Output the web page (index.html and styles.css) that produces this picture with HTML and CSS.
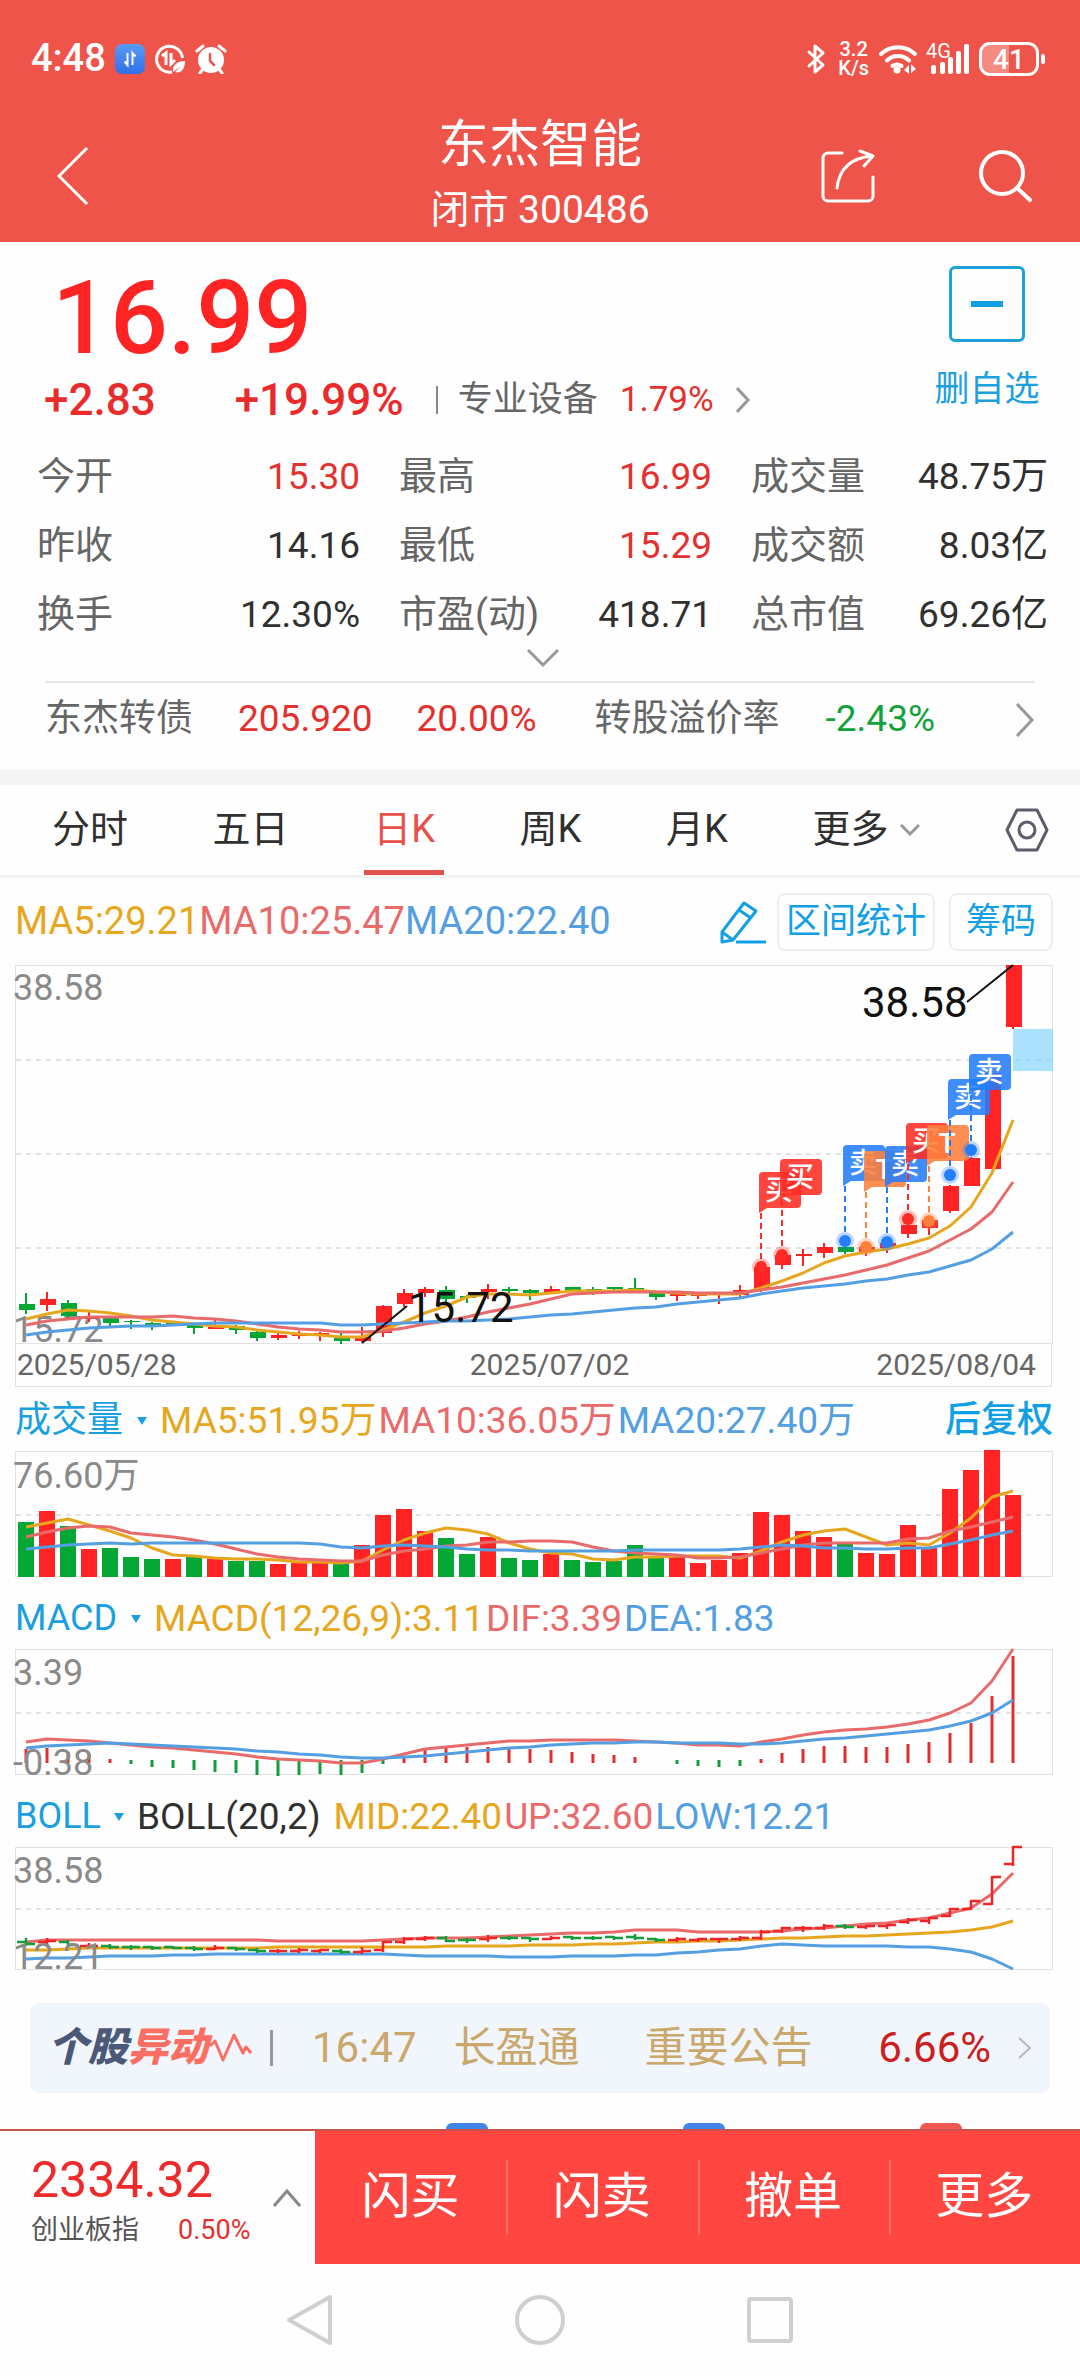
FILE: index.html
```
<!DOCTYPE html>
<html lang="zh-CN">
<head>
	<meta charset="utf-8">
	<meta name="viewport" content="width=device-width, initial-scale=1">
	<title>东杰智能 300486</title>
	<link rel="stylesheet" href="styles.css">
</head>
<body>

<header>
	<div class="status">
		<span class="clock">4:48</span>
		<svg width="30" height="30" viewBox="0 0 30 30">
			<defs><linearGradient id="blue" x1="0" y1="0" x2="0" y2="1"><stop offset="0" stop-color="#5a9bf5"/><stop offset="1" stop-color="#2f6fe8"/></linearGradient></defs>
			<rect width="30" height="30" rx="7" fill="url(#blue)"/>
			<path d="M12.500 9v12l-3-3.500M17.500 21V9l3 3.500" fill="none" stroke="#fff" stroke-width="2"/>
		</svg>
		<svg width="32" height="30" viewBox="0 0 32 30" fill="none" stroke="#fff" stroke-width="3">
			<path d="M18 28A13 13 0 1 1 28.500 14"/>
			<path d="M8 12l4-3v12M17 9v11l4-4" stroke-width="3"/>
			<path d="M19 28c-1-7 4-11 12-11 0 8-4 13-10 11l6-6" fill="#fff" stroke="none"/>
		</svg>
		<svg width="32" height="30" viewBox="0 0 32 30" fill="none" stroke="#fff" stroke-width="3" stroke-linecap="round">
			<circle cx="16" cy="16" r="11.500" fill="#fff"/>
			<path d="M2 7l6-5M30 7l-6-5M8 25l-3 4M24 25l3 4"/>
			<path d="M15 10v7l4 4" stroke="#ee5449" stroke-width="2.500"/>
		</svg>
		<span class="spacer"></span>
		<svg width="20" height="32" viewBox="0 0 20 32" fill="none" stroke="#fff" stroke-width="3" stroke-linejoin="round" stroke-linecap="round">
			<path d="M3 9l14 13-8 7V3l8 7L3 23"/>
		</svg>
		<span class="speed"><span>3.2</span><span>K/s</span></span>
		<svg width="38" height="30" viewBox="0 0 38 30" fill="none" stroke="#fff" stroke-width="4" stroke-linecap="round">
			<path d="M2 10a25 25 0 0 1 34 0M8 16.500a16 16 0 0 1 22 0M13.500 22a8 8 0 0 1 9 0"/>
			<circle cx="18" cy="26" r="3.500" fill="#fff" stroke="none"/>
			<path d="M25 26l5-5v9zM37 25l-5-5v9z" fill="#fff" stroke="none"/>
		</svg>
		<span class="signal">
			<span class="gen">4G</span>
			<svg width="39" height="32" viewBox="0 0 39 32" fill="#fff">
				<rect x="0" y="22" width="5" height="9" rx="2"/><rect x="9" y="19" width="5" height="12" rx="2"/>
				<rect x="17" y="14" width="5" height="17" rx="2"/><rect x="25" y="8" width="5" height="23" rx="2"/>
				<rect x="33" y="1" width="5" height="30" rx="2"/>
			</svg>
		</span>
		<span class="battery">41</span>
	</div>

	<div class="titlebar">
		<button class="icon" aria-label="返回">
			<svg width="32" height="60" viewBox="0 0 32 60" fill="none" stroke="#fff" stroke-width="3"><path d="M30 2L2 30l28 28"/></svg>
		</button>
		<div class="title">
			<h1>东杰智能</h1>
			<p>闭市 300486</p>
		</div>
		<div class="actions">
			<button class="icon" aria-label="分享">
				<svg width="54" height="54" viewBox="0 0 54 54" fill="none" stroke="#fff" stroke-width="3" stroke-linejoin="round" stroke-linecap="round">
					<path d="M21 4H7a5 5 0 0 0-5 5v38a5 5 0 0 0 5 5h40a5 5 0 0 0 5-5V28"/>
					<path d="M16 39C18 22 28 9 51 7M39 2l13 5-9 10"/>
				</svg>
			</button>
			<button class="icon" aria-label="搜索">
				<svg width="54" height="54" viewBox="0 0 54 54" fill="none" stroke="#fff" stroke-width="4" stroke-linecap="round">
					<circle cx="24" cy="24" r="21"/><path d="M39 39l13 12"/>
				</svg>
			</button>
		</div>
	</div>
</header>

<section class="quote">
	<div class="top">
		<div>
			<div class="price">16.99</div>
			<div class="change">
				<b>+2.83</b>
				<b>+19.99%</b>
				<a class="sector" href="#"><span>专业设备</span><span class="up">1.79%</span>
					<svg width="14" height="26" viewBox="0 0 14 26" fill="none" stroke="#999" stroke-width="3"><path d="M1 1l11 12L1 25"/></svg>
				</a>
			</div>
		</div>
		<button class="fav"><i></i>删自选</button>
	</div>

	<dl class="stats">
		<div><dt>今开</dt><dd class="up">15.30</dd></div>
		<div><dt>最高</dt><dd class="up">16.99</dd></div>
		<div><dt>成交量</dt><dd>48.75万</dd></div>
		<div><dt>昨收</dt><dd>14.16</dd></div>
		<div><dt>最低</dt><dd class="up">15.29</dd></div>
		<div><dt>成交额</dt><dd>8.03亿</dd></div>
		<div><dt>换手</dt><dd>12.30%</dd></div>
		<div><dt>市盈(动)</dt><dd>418.71</dd></div>
		<div><dt>总市值</dt><dd>69.26亿</dd></div>
	</dl>
	<button class="expand" aria-label="展开">
		<svg width="32" height="18" viewBox="0 0 32 18" fill="none" stroke="#999" stroke-width="3"><path d="M1 1l15 15L31 1"/></svg>
	</button>

	<a class="bond" href="#">
		<span>东杰转债</span>
		<span class="up first">205.920</span>
		<span class="up second">20.00%</span>
		<span>转股溢价率</span>
		<span class="down third">-2.43%</span>
		<svg width="20" height="34" viewBox="0 0 20 34" fill="none" stroke="#999" stroke-width="3"><path d="M2 1l15 16L2 33"/></svg>
	</a>
</section>

<nav class="tabs">
	<button>分时</button>
	<button>五日</button>
	<button class="on">日K</button>
	<button>周K</button>
	<button>月K</button>
	<button>更多<svg width="20" height="12" viewBox="0 0 20 12" fill="none" stroke="#999" stroke-width="3"><path d="M1 1l9 9 9-9"/></svg></button>
	<button aria-label="设置">
		<svg width="44" height="44" viewBox="0 0 44 44" fill="none" stroke="#5b5d6b" stroke-width="3" stroke-linejoin="round">
			<path d="M12 2h20l10 20-10 20H12L2 22z"/><circle cx="22" cy="22" r="8"/>
		</svg>
	</button>
</nav>

<main>
	<div class="legend kline">
		<span class="c5">MA5:29.21</span><span class="c10">MA10:25.47</span><span class="c20">MA20:22.40</span>
		<span class="spacer"></span>
		<button class="pencil" aria-label="画线">
			<svg width="46" height="44" viewBox="0 0 46 44" fill="none" stroke="#12a0e4" stroke-width="3" stroke-linejoin="round">
				<path d="M2 42V32L24 3l12 8-23 29zM2 32l11 8M19 10l12 8"/><path d="M16 42h30"/>
			</svg>
		</button>
		<button class="tool">区间统计</button>
		<button class="tool wide">筹码</button>
	</div>
	<svg class="chart" id="kline" viewBox="0 0 1080 379"></svg>
	<div class="dates"><span>2025/05/28</span><span class="middle">2025/07/02</span><span>2025/08/04</span></div>

	<div class="legend">
		<label class="picker"><select aria-label="指标一"><option>成交量</option></select><i></i></label>
		<span class="c5">MA5:51.95万</span><span class="c10">MA10:36.05万</span><span class="c20">MA20:27.40万</span>
		<span class="spacer"></span>
		<button class="adjust">后复权</button>
	</div>
	<svg class="chart" id="volume" viewBox="0 0 1080 126"></svg>

	<div class="legend tall">
		<label class="picker"><select aria-label="指标二"><option>MACD</option></select><i></i></label>
		<span class="c5">MACD(12,26,9):3.11</span><span class="c10">DIF:3.39</span><span class="c20">DEA:1.83</span>
	</div>
	<svg class="chart" id="macd" viewBox="0 0 1080 126"></svg>

	<div class="legend tall">
		<label class="picker"><select aria-label="指标三"><option>BOLL</option></select><i></i></label>
		<span class="param">BOLL(20,2)</span><span class="c5">MID:22.40</span><span class="c10">UP:32.60</span><span class="c20">LOW:12.21</span>
	</div>
	<svg class="chart" id="boll" viewBox="0 0 1080 123"></svg>

	<a class="notice" href="#">
		<span class="logo">个股<em>异动</em></span>
		<svg class="pulse" width="42" height="34" viewBox="0 0 42 34" fill="none" stroke="#fb6f63" stroke-width="3" stroke-linejoin="round"><path d="M0 15l5-5 8 19L24 4l9 18 3-6 5 6"/></svg>
		<span class="time">16:47</span>
		<span class="name">长盈通</span>
		<span class="what">重要公告</span>
		<span class="pct">6.66%</span>
		<svg width="14" height="22" viewBox="0 0 14 22" fill="none" stroke="#b5b8c0" stroke-width="2"><path d="M1 1l11 10L1 21"/></svg>
	</a>

	<div class="shortcuts"><i></i><i></i><i class="hot"></i></div>
</main>

<footer>
	<div class="trade">
		<button class="index">
			<span class="num">2334.32</span>
			<span class="sub"><span>创业板指</span><span class="up">0.50%</span></span>
			<svg width="28" height="18" viewBox="0 0 28 18" fill="none" stroke="#888" stroke-width="3"><path d="M1 17L14 2l13 15"/></svg>
		</button>
		<button class="act">闪买</button>
		<button class="act">闪卖</button>
		<button class="act">撤单</button>
		<button class="act">更多</button>
	</div>
	<div class="sysnav">
		<button class="icon" aria-label="后退"><svg width="52" height="52" viewBox="0 0 52 52" fill="none" stroke="#cfcfcf" stroke-width="4" stroke-linejoin="round"><path d="M46 3v46L5 26z"/></svg></button>
		<button class="icon" aria-label="主页"><svg width="52" height="52" viewBox="0 0 52 52" fill="none" stroke="#cfcfcf" stroke-width="4"><circle cx="26" cy="26" r="23"/></svg></button>
		<button class="icon" aria-label="最近任务"><svg width="52" height="52" viewBox="0 0 52 52" fill="none" stroke="#cfcfcf" stroke-width="4"><rect x="5" y="5" width="42" height="42" rx="2"/></svg></button>
	</div>
</footer>

<script src="charts.js"></script>
</body>
</html>
```

FILE: styles.css
```
* {
	box-sizing: border-box;
}

body {
	margin: 0;
	min-height: 100vh;
	background-color: #fefefe;
	color: #303030;
	font-family: Roboto, "Noto Sans CJK SC", sans-serif;
	font-size: 36px;
	line-height: 1.2;
}

h1, p, dl, dd {
	margin: 0;
	font-weight: normal;
}

button, select {
	margin: 0;
	padding: 0;
	border: 0;
	background: none;
	color: inherit;
	font: inherit;
	cursor: pointer;
}

a {
	color: inherit;
	text-decoration: none;
}

svg {
	display: block;
	flex: none;
}

.spacer {
	flex: 1;
}

.up {
	color: #e3312f;
}

.down {
	color: #12a23c;
}

/* red header */

header {
	background-color: #ee5449;
	color: #fff;
}

.status {
	display: flex;
	align-items: center;
	gap: 9px;
	height: 110px;
	padding: 8px 41px 0 31px;
}

.clock {
	font-size: 38px;
	font-weight: 500;
}

.speed {
	display: flex;
	flex-direction: column;
	margin: 0 1px 0 3px;
	font-size: 20px;
	font-weight: 500;
	line-height: 19px;
	text-align: center;
}

.signal {
	position: relative;
	padding-left: 5px;
}

.gen {
	position: absolute;
	left: 0;
	top: 0;
	font-size: 20px;
	line-height: 16px;
}

.battery {
	position: relative;
	width: 60px;
	height: 34px;
	border: 3px solid #fff;
	border-radius: 11px;
	background: linear-gradient(90deg, #f48a82 50%, transparent 50%);
	font-size: 28px;
	font-weight: 500;
	line-height: 29px;
	text-align: center;
}

.battery:after {
	content: "";
	position: absolute;
	right: -9px;
	top: 9px;
	width: 4px;
	height: 10px;
	border-radius: 2px;
	background-color: #fff;
}

.titlebar {
	display: grid;
	grid-template-columns: 1fr auto 1fr;
	height: 132px;
	padding: 0 48px 0 48px;
}

.icon {
	display: flex;
	align-items: center;
}

.titlebar > .icon {
	padding-left: 9px;
}

.actions {
	display: flex;
	justify-content: flex-end;
	gap: 103px;
}

.title {
	padding-top: 7px;
	text-align: center;
}

.title h1 {
	font-size: 51px;
	line-height: 56px;
}

.title p {
	margin-top: 12px;
	font-size: 39px;
	line-height: 50px;
}

/* quote */

.quote {
	padding: 24px 32px 14px 37px;
	border-bottom: 15px solid #f4f4f4;
}

.top {
	display: flex;
	justify-content: space-between;
}

.price {
	padding-left: 15px;
	color: #ff2323;
	font-size: 102px;
	font-weight: 500;
	line-height: 104px;
}

.change {
	display: flex;
	align-items: center;
	gap: 79px;
	height: 60px;
	padding-left: 7px;
	color: #ea2b2b;
	font-size: 44px;
}

.change b {
	font-weight: 500;
}

.sector {
	display: flex;
	align-items: center;
	gap: 22px;
	height: 28px;
	margin-left: -47px;
	padding-left: 20px;
	border-left: 2px solid #888;
	color: #666;
	font-size: 35px;
}

.fav {
	width: 112px;
	height: 144px;
	margin-right: 5px;
	color: #1ea0dc;
	font-size: 35px;
	line-height: 40px;
}

.fav i {
	display: block;
	width: 76px;
	height: 76px;
	margin: 0 auto 28px;
	border: 3px solid #1ea0dc;
	border-radius: 6px;
	background: linear-gradient(#12a0e4, #12a0e4) center / 32px 6px no-repeat;
}

.stats {
	display: grid;
	grid-template-columns: 323fr 313fr 297fr;
	column-gap: 39px;
	margin-top: 12px;
	line-height: 69px;
}

.stats div {
	display: flex;
	justify-content: space-between;
}

.stats dt {
	color: #666;
	font-size: 38px;
}

.stats dd {
	font-size: 37px;
	white-space: nowrap;
}

.expand {
	display: block;
	width: 100%;
	height: 32px;
}

.expand svg {
	margin: 0 auto 14px;
}

.bond {
	display: flex;
	align-items: center;
	height: 75px;
	margin: 0 13px 0 8px;
	border-top: 2px solid #e6e6e6;
	color: #666;
	font-size: 37px;
}

.bond .first {
	margin-left: 45px;
}

.bond .second {
	margin: 0 58px 0 44px;
}

.bond .third {
	margin-left: 46px;
	margin-right: auto;
}

/* period tabs */

.tabs {
	display: flex;
	justify-content: space-between;
	height: 93px;
	padding: 0 31px 0 52px;
	border-bottom: 3px solid #f3f3f3;
	font-size: 38px;
}

.tabs button {
	display: flex;
	align-items: center;
	position: relative;
	gap: 12px;
}

.tabs .on {
	color: #e8504c;
}

.tabs .on:after {
	content: "";
	position: absolute;
	left: -9px;
	right: -9px;
	bottom: 0;
	height: 5px;
	background-color: #e2504f;
}

/* charts */

.legend {
	display: flex;
	align-items: center;
	gap: 2px;
	height: 64px;
	padding: 4px 27px 0 15px;
	font-size: 37px;
	white-space: nowrap;
}

.kline {
	gap: 0;
	height: 87px;
	padding-top: 0;
	font-size: 38px;
}

.tall {
	height: 72px;
	padding-top: 12px;
}

.c5 {
	color: #e6a71f;
}

.c10 {
	color: #e86a6a;
}

.c20 {
	color: #539fe2;
}

.param {
	margin-right: 11px;
}

.pencil {
	margin-right: 11px;
}

.tool {
	height: 58px;
	padding: 0 7px;
	border: 2px solid #eee;
	border-radius: 8px;
	color: #12a0e4;
	font-size: 35px;
}

.wide {
	margin-left: 14px;
	padding: 0 15px;
}

.picker {
	display: flex;
	align-items: center;
	gap: 13px;
	margin-right: 11px;
	color: #1a9fe0;
	font-size: 36px;
}

.picker select {
	appearance: none;
}

.picker i {
	border: 5px solid transparent;
	border-top: 8px solid #1a9fe0;
	border-bottom: 0;
}

.adjust {
	color: #12a0e4;
	font-size: 36px;
	font-weight: 500;
}

.chart {
	width: 100%;
	overflow: visible;
}

.frame {
	fill: none;
	stroke: #e2e2e2;
	stroke-width: 1;
}

.grid {
	stroke: #e2e2e2;
	stroke-width: 2;
	stroke-dasharray: 5 5;
}

.line {
	fill: none;
	stroke-width: 3;
	stroke-linejoin: round;
}

.axis {
	fill: #8a8a8a;
	font-size: 36px;
}

.mark {
	fill: #111;
	font-size: 42px;
}

.flag {
	fill: #fff;
	font-size: 28px;
	font-weight: 500;
	text-anchor: middle;
}

.dates {
	display: flex;
	justify-content: space-between;
	height: 43px;
	margin: 0 28px 0 15px;
	padding: 0 15px 0 1px;
	border: 1px solid #e2e2e2;
	border-top: 0;
	color: #666;
	font-size: 30px;
	line-height: 41px;
}

.dates .middle {
	margin-left: 46px;
}

/* notice strip */

.notice {
	display: flex;
	align-items: center;
	height: 90px;
	margin: 33px 30px 30px;
	padding: 0 18px 0 18px;
	border-radius: 8px;
	background-color: #f1f5fc;
	color: #caa76b;
	font-size: 42px;
}

.logo {
	color: #4b5878;
	font-size: 40px;
	font-weight: 900;
	font-style: italic;
}

.logo em {
	color: #fb6f63;
}

.pulse {
	margin-left: 2px;
}

.time {
	margin-left: 18px;
	padding-left: 42px;
	background: linear-gradient(#999, #999) left center / 3px 36px no-repeat;
}

.name {
	margin-left: 37px;
}

.what {
	margin-left: 65px;
}

.pct {
	margin-left: auto;
	margin-right: 27px;
	color: #cc2020;
}

.shortcuts {
	display: flex;
	gap: 195px;
	height: 6px;
	padding-left: 446px;
	overflow: hidden;
}

.shortcuts i {
	width: 42px;
	height: 42px;
	border-radius: 6px;
	background-color: #3f86e6;
}

.shortcuts .hot {
	background-color: #f0574f;
}

/* bottom bars */

.trade {
	display: flex;
	height: 135px;
	border-top: 2px solid #c9534d;
}

.index {
	position: relative;
	width: 315px;
	padding: 4px 0 0 31px;
	text-align: left;
}

.index .num {
	display: block;
	color: #ee2a2a;
	font-size: 50px;
	line-height: 60px;
}

.index .sub {
	display: flex;
	gap: 39px;
	color: #555;
	font-size: 27px;
	line-height: 40px;
}

.index svg {
	position: absolute;
	right: 14px;
	top: 58px;
}

.act {
	flex: 1;
	background-color: #ff4640;
	color: #fff;
	font-size: 49px;
}

.act + .act {
	background-image: linear-gradient(#ff6f68, #ff6f68);
	background-position: left center;
	background-size: 2px 75px;
	background-repeat: no-repeat;
}

.sysnav {
	display: flex;
	justify-content: center;
	gap: 178px;
	height: 112px;
}
```

FILE: charts.js
```
var RED = '#ff2323';
var GREEN = '#04a733';
var C5 = '#e6a71f', C10 = '#e86a6a', C20 = '#539fe2';

// one entry per day: colour, high, body top, body bottom, low
var candles = [
	['g',328,339,345,349],['r',327,334,340,346],['g',335,338,351,355],['r',347,352,354,357],
	['g',351,352,358,361],['g',355,356,357,364],['g',357,358,360,365],['g',358,358,360,360],
	['g',358,360,363,369],['r',353,362,364,364],['g',360,361,365,369],['g',365,367,373,376],
	['r',368,370,373,375],['r',366,369,371,374],['r',367,368,370,376],['g',368,373,376,379],
	['r',362,372,376,377],['r',340,341,368,372],['r',324,328,339,342],['r',322,324,328,332],
	['g',321,325,334,337],['g',330,331,333,338],['r',319,324,327,334],['g',322,324,326,328],
	['g',324,325,328,335],['r',321,324,328,328],['g',322,322,325,327],['g',322,324,326,330],
	['g',322,322,324,328],['g',313,323,325,328],['g',327,328,332,335],['r',326,329,331,336],
	['r',328,329,331,334],['r',327,328,330,339],['r',320,325,330,332],['r',300,302,324,327],
	['r',288,290,300,304],['r',284,289,291,301],['r',278,282,288,293],['g',280,282,287,289],
	['r',281,282,287,291],['r',278,278,283,288],['r',258,260,269,273],['r',253,255,263,270],
	['r',220,221,246,248],['r',192,193,221,221],['r',108,108,204,204],['r',0,0,62,64]
];

var ma5 = [354,349,345,346,348,351,355,357,359,361,362,365,367,369,370,372,372,365,357,348,341,332,329,329,330,328,326,326,326,325,327,328,329,329,329,323,316,308,298,291,287,284,279,273,261,242,208,155];
var ma10 = [360,356,354,352,352,352,352,351,353,354,356,359,362,364,365,367,367,366,363,359,356,352,347,343,339,334,329,328,327,327,327,327,328,328,328,325,322,318,314,310,305,300,293,286,275,264,247,217];
var ma20 = [370,367,365,363,362,361,361,360,359,358,358,358,358,358,358,360,360,359,358,357,356,356,355,354,352,350,349,347,345,343,342,339,337,335,333,329,326,323,321,319,316,314,310,307,301,295,284,267];

var vols = [55,66,51,28,29,20,18,18,20,18,16,16,13,14,14,14,32,62,68,46,39,23,40,19,17,23,17,15,16,32,20,20,14,17,24,65,62,46,40,33,24,23,52,30,88,107,127,82];
var volRed = [1,3,7,9,12,13,14,16,17,18,19,22,25,31,32,33,34,35,36,37,38,40,41,42,43,44,45,46,47];
var vol5 = [76,72,68,74,80,87,97,104,105,107,108,108,109,111,111,112,110,99,89,82,77,79,83,92,98,102,103,108,109,106,106,105,105,105,107,100,91,84,80,78,86,94,92,94,82,67,46,40];
var vol10 = [86,81,77,75,76,82,84,86,89,93,98,103,106,108,109,110,110,104,100,98,95,94,91,91,90,90,91,96,100,102,103,104,107,107,106,102,98,94,92,92,92,92,88,87,80,76,71,66];
var vol20 = [98,96,94,93,92,93,92,92,92,92,92,92,92,92,93,96,97,95,94,95,96,98,99,99,100,100,100,100,100,99,99,99,99,99,98,96,94,95,97,97,98,98,97,97,93,89,84,80];

var hist = [100,99,103,105,110,115,118,119,121,123,124,126,127,126,125,126,124,115,109,99,98,98,98,99,100,101,103,105,106,108,113,115,117,118,117,110,104,100,97,97,98,98,95,93,84,74,47,7];
var dif = [93,90,91,92,94,96,98,99,101,103,105,108,110,111,112,114,114,110,105,100,98,96,94,92,92,91,91,91,91,92,93,94,96,96,97,93,90,86,83,81,80,78,75,71,64,54,32,0];
var dea = [99,97,96,95,94,95,96,97,98,99,100,102,103,105,106,108,109,109,108,107,105,103,101,99,98,96,95,94,94,93,93,94,94,94,95,95,94,92,90,89,87,85,83,81,77,72,64,51];

var up = [95,93,93,93,93,93,93,93,93,93,93,93,94,94,94,94,94,93,92,91,91,91,90,89,88,87,86,86,85,83,83,83,85,85,85,85,84,82,81,79,77,76,73,71,66,61,47,26];
var mid = [103,103,102,101,101,101,101,101,101,101,101,101,100,100,100,100,100,100,100,100,99,99,99,99,98,98,98,97,97,96,95,95,94,94,93,92,91,91,90,89,89,88,87,86,85,83,80,74];
var low = [112,111,111,110,109,109,109,108,108,107,107,107,107,107,107,107,107,107,108,109,109,109,109,110,110,110,109,109,109,108,108,106,105,103,102,99,97,98,99,99,99,99,100,100,102,105,112,122];

// buy / sell / T flags: day, kind, flag top, dot y
var flags = [
	[35,'买',207,302],[36,'买',194,290],[39,'卖',180,276],[40,'T',186,282],[41,'卖',181,277],
	[42,'买',158,254],[43,'T',160,256],[44,'卖',114,210],[45,'卖',89,185]
];
var flagColor = { '买': '#fe2c24', '卖': '#247dfb', 'T': '#fe803c' };

function x(i) {
	return 26 + 21 * i;
}

function frame(h, rows) {
	var s = '<rect class="frame" x="15.500" y="0.500" width="1037" height="' + (h - 1) + '"/>';
	rows.forEach(function (y) {
		s += '<path class="grid" d="M16 ' + y + 'H1052"/>';
	});
	return s;
}

function line(data, color) {
	var pts = data.map(function (y, i) { return x(i) + ',' + y; });
	return '<polyline class="line" stroke="' + color + '" points="' + pts.join(' ') + '"/>';
}

function axis(y, text) {
	return '<text class="axis" x="13" y="' + y + '">' + text + '</text>';
}

function drawKline() {
	var s = frame(379, [95, 189, 283]);
	s += '<rect x="1013" y="64" width="40" height="42" fill="#7dd3fd" opacity="0.650"/>';
	s += axis(35, '38.58') + axis(377, '15.72');
	candles.forEach(function (c, i) {
		var color = c[0] == 'r' ? RED : GREEN;
		s += '<path d="M' + x(i) + ' ' + c[1] + 'V' + c[4] + '" stroke="' + color + '" stroke-width="2"/>';
		s += '<rect x="' + (x(i) - 7) + '" y="' + c[2] + '" width="16" height="' + (c[3] - c[2]) + '" fill="' + color + '"/>';
	});
	s += line(ma5, C5) + line(ma10, C10) + line(ma20, C20);
	s += '<path d="M967 37L1013 0M362 378L407 341" stroke="#111" stroke-width="2"/>';
	s += '<text class="mark" x="862" y="52">38.58</text><text class="mark" x="408" y="357">15.72</text>';

	flags.forEach(function (f) {
		var cx = x(f[0]), top = f[2], color = flagColor[f[1]];
		s += '<path d="M' + cx + ' ' + (top + 41) + 'V' + f[3] + '" stroke="' + color + '" stroke-width="2" stroke-dasharray="6 4"/>';
		s += '<circle cx="' + cx + '" cy="' + f[3] + '" r="9" fill="' + color + '" opacity="0.300"/>';
		s += '<circle cx="' + cx + '" cy="' + f[3] + '" r="6" fill="' + color + '"/>';
		s += '<path fill="' + color + '" opacity="0.880" d="M' + (cx - 2) + ' ' + (top + 41) + 'v-37a4 4 0 0 1 4-4h34a4 4 0 0 1 4 4v28a4 4 0 0 1-4 4h-30z"/>';
		s += '<text class="flag" x="' + (cx + 18) + '" y="' + (top + 28) + '">' + f[1] + '</text>';
	});
	document.getElementById('kline').innerHTML = s;
}

function drawVolume() {
	var s = frame(126, [64]);
	vols.forEach(function (v, i) {
		var color = volRed.indexOf(i) > -1 ? RED : GREEN;
		s += '<rect x="' + (x(i) - 8) + '" y="' + (126 - v) + '" width="16" height="' + v + '" fill="' + color + '"/>';
	});
	s += line(vol5, C5) + line(vol10, C10) + line(vol20, C20) + axis(37, '76.60万');
	document.getElementById('volume').innerHTML = s;
}

function drawMacd() {
	var s = frame(126, [64]);
	hist.forEach(function (y, i) {
		if (y == 113) return;
		var red = y < 113;
		s += '<path d="M' + x(i) + ' ' + (red ? 114 : 111) + 'V' + y + '" stroke="' + (red ? '#e02f2f' : '#159c3c') + '" stroke-width="3"/>';
	});
	s += line(dif, C10) + line(dea, C20) + axis(36, '3.39') + axis(126, '-0.38');
	document.getElementById('macd').innerHTML = s;
}

function drawBoll() {
	var s = frame(123, [62]);
	s += line(up, C10) + line(mid, C5) + line(low, C20);
	candles.forEach(function (c, i) {
		// same prices as the k-line on a flatter scale
		var y = c.slice(1).map(function (v) { return Math.round(v * 0.28); });
		var red = c[0] == 'r';
		var open = red ? y[2] : y[1], close = red ? y[1] : y[2];
		s += '<path fill="none" stroke="' + (red ? '#ee2626' : '#159c3c') + '" stroke-width="2.500" d="M' + x(i) + ' ' + (y[0] - 1) + 'V' + (y[3] + 1);
		s += 'M' + (x(i) - 9) + ' ' + open + 'h9M' + x(i) + ' ' + close + 'h9"/>';
	});
	s += axis(36, '38.58') + axis(122, '12.21');
	document.getElementById('boll').innerHTML = s;
}

drawKline();
drawVolume();
drawMacd();
drawBoll();
```
